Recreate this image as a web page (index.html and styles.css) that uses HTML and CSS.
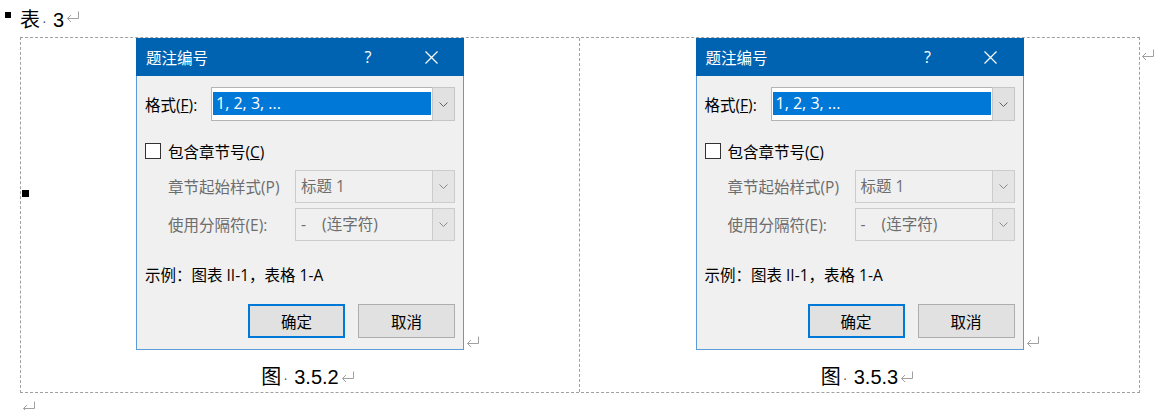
FILE: index.html
```html
<!DOCTYPE html>
<html lang="zh-CN">
<head>
<meta charset="utf-8">
<link rel="stylesheet" href="styles.css">
</head>
<body>
<div class="heading">
  <span class="bullet"></span>
  <span class="h-text">表<span class="sp">·</span>3</span>
  <svg class="ret" width="14" height="12" viewBox="0 0 14 12"><path d="M12.5 0.5 V7.5 H1.5 M5 4 L1.5 7.5 L5 11" /></svg>
</div>

<div class="tbl">
  <div class="cell cell-left">
    <div class="fig">
      <div class="dialog">
        <div class="titlebar">
          <span class="title">题注编号</span>
          <span class="help">?</span>
          <span class="close"><svg width="13" height="13" viewBox="0 0 13 13"><path d="M0.5 0.5 L12.5 12.5 M12.5 0.5 L0.5 12.5"/></svg></span>
        </div>
        <div class="dbody">
          <div class="row fmt">
            <span class="lbl">格式(<u>F</u>):</span>
            <div class="combo active">
              <span class="sel">1, 2, 3, ...</span>
              <span class="arrow"><svg width="9" height="5" viewBox="0 0 9 5"><path d="M0.5 0.5 L4.5 4.5 L8.5 0.5"/></svg></span>
            </div>
          </div>
          <div class="row chk"><span class="box"></span><span>包含章节号(<u>C</u>)</span></div>
          <div class="row sub first">
            <span class="lbl2">章节起始样式(P)</span>
            <div class="combo dis">
              <span class="val">标题 1</span>
              <span class="arrow"><svg width="9" height="5" viewBox="0 0 9 5"><path d="M0.5 0.5 L4.5 4.5 L8.5 0.5"/></svg></span>
            </div>
          </div>
          <div class="row sub second">
            <span class="lbl2">使用分隔符(E):</span>
            <div class="combo dis">
              <span class="val">-&nbsp;&nbsp;&nbsp;&nbsp;(连字符)</span>
              <span class="arrow"><svg width="9" height="5" viewBox="0 0 9 5"><path d="M0.5 0.5 L4.5 4.5 L8.5 0.5"/></svg></span>
            </div>
          </div>
          <div class="example">示例：图表 II-1，表格 1-A</div>
          <div class="btns"><span class="btn default">确定</span><span class="btn">取消</span></div>
        </div>
      </div>
      <span class="ret-after"><svg class="ret" width="14" height="12" viewBox="0 0 14 12"><path d="M12.5 0.5 V7.5 H1.5 M5 4 L1.5 7.5 L5 11" /></svg></span>
    </div>
    <div class="caption"><span class="cap-text">图<span class="sp">·</span>3.5.2</span><span class="ret-after cap"><svg class="ret" width="14" height="12" viewBox="0 0 14 12"><path d="M12.5 0.5 V7.5 H1.5 M5 4 L1.5 7.5 L5 11" /></svg></span></div>
  </div>

  <div class="cell cell-right">
    <div class="fig">
      <div class="dialog">
        <div class="titlebar">
          <span class="title">题注编号</span>
          <span class="help">?</span>
          <span class="close"><svg width="13" height="13" viewBox="0 0 13 13"><path d="M0.5 0.5 L12.5 12.5 M12.5 0.5 L0.5 12.5"/></svg></span>
        </div>
        <div class="dbody">
          <div class="row fmt">
            <span class="lbl">格式(<u>F</u>):</span>
            <div class="combo active">
              <span class="sel">1, 2, 3, ...</span>
              <span class="arrow"><svg width="9" height="5" viewBox="0 0 9 5"><path d="M0.5 0.5 L4.5 4.5 L8.5 0.5"/></svg></span>
            </div>
          </div>
          <div class="row chk"><span class="box"></span><span>包含章节号(<u>C</u>)</span></div>
          <div class="row sub first">
            <span class="lbl2">章节起始样式(P)</span>
            <div class="combo dis">
              <span class="val">标题 1</span>
              <span class="arrow"><svg width="9" height="5" viewBox="0 0 9 5"><path d="M0.5 0.5 L4.5 4.5 L8.5 0.5"/></svg></span>
            </div>
          </div>
          <div class="row sub second">
            <span class="lbl2">使用分隔符(E):</span>
            <div class="combo dis">
              <span class="val">-&nbsp;&nbsp;&nbsp;&nbsp;(连字符)</span>
              <span class="arrow"><svg width="9" height="5" viewBox="0 0 9 5"><path d="M0.5 0.5 L4.5 4.5 L8.5 0.5"/></svg></span>
            </div>
          </div>
          <div class="example">示例：图表 II-1，表格 1-A</div>
          <div class="btns"><span class="btn default">确定</span><span class="btn">取消</span></div>
        </div>
      </div>
      <span class="ret-after"><svg class="ret" width="14" height="12" viewBox="0 0 14 12"><path d="M12.5 0.5 V7.5 H1.5 M5 4 L1.5 7.5 L5 11" /></svg></span>
    </div>
    <div class="caption"><span class="cap-text">图<span class="sp">·</span>3.5.3</span><span class="ret-after cap"><svg class="ret" width="14" height="12" viewBox="0 0 14 12"><path d="M12.5 0.5 V7.5 H1.5 M5 4 L1.5 7.5 L5 11" /></svg></span></div>
  </div>

  <svg class="ret row-end" width="14" height="12" viewBox="0 0 14 12"><path d="M12.5 0.5 V7.5 H1.5 M5 4 L1.5 7.5 L5 11" /></svg>
  <span class="anchor"></span>
</div>

<div class="after"><svg class="ret" width="14" height="12" viewBox="0 0 14 12"><path d="M12.5 0.5 V7.5 H1.5 M5 4 L1.5 7.5 L5 11" /></svg></div>
</body>
</html>
```

FILE: styles.css
```css
html, body {
  margin: 0;
  padding: 0;
  background: #ffffff;
}

body {
  font-family: "Open Sans", "Noto Sans CJK SC", sans-serif;
  color: #000;
}

.ret {
  display: block;
  fill: none;
  stroke: #a0a0a0;
  stroke-width: 1;
}

.heading {
  height: 37px;
  box-sizing: border-box;
  display: flex;
  align-items: flex-start;
  padding-left: 5px;
  padding-top: 8px;
}

.bullet {
  width: 6px;
  height: 6px;
  background: #000;
  margin-top: 4px;
  margin-right: 9px;
  flex: none;
}

.h-text {
  font-family: "Liberation Sans", "Noto Sans CJK SC", sans-serif;
  font-size: 20px;
  line-height: 24px;
  display: flex;
}

.sp {
  display: inline-block;
  width: 13px;
  padding-left: 2px;
  box-sizing: border-box;
  color: #555;
  font-family: "Liberation Sans", sans-serif;
  font-size: 14px;
  line-height: 24px;
  position: relative;
  top: 1px;
}

.heading .ret {
  margin-top: 3px;
  margin-left: 2px;
}

/* table */
.tbl {
  position: relative;
  margin-left: 20px;
  width: 1120px;
  height: 356px;
  box-sizing: border-box;
  border: 1px dashed #a0a0a0;
  display: flex;
}

.cell {
  box-sizing: border-box;
  display: flex;
  flex-direction: column;
  align-items: center;
}

.cell-left {
  width: 559px;
  border-right: 1px dashed #a0a0a0;
}

.cell-right {
  flex: 1;
}

.fig {
  display: flex;
}

.ret-after {
  width: 0;
  align-self: flex-end;
  overflow: visible;
}

.fig .ret-after .ret {
  margin-left: 2px;
  margin-bottom: 2px;
}

.row-end {
  position: absolute;
  left: 1120px;
  top: 11px;
}

.anchor {
  position: absolute;
  left: 1px;
  top: 152px;
  width: 7px;
  height: 7px;
  background: #000;
}

/* dialog */
.dialog {
  width: 328px;
  font-size: 15.5px;
}

.titlebar {
  height: 38px;
  background: #0063b1;
  color: #fff;
  display: flex;
  align-items: center;
}

.title {
  padding-left: 10px;
  font-size: 15.5px;
}

.help {
  margin-left: auto;
  width: 20px;
  text-align: center;
  font-size: 16px;
}

.close {
  width: 40px;
  margin-left: 33px;
  margin-right: 13px;
  display: flex;
  justify-content: center;
}

.close svg {
  display: block;
  fill: none;
  stroke: #fff;
  stroke-width: 1.2;
}

.dbody {
  height: 274px;
  box-sizing: border-box;
  background: #f0f0f0;
  border: 1px solid #5a9bd8;
  border-top: none;
  padding: 11px 8px 0 8px;
}

.row {
  display: flex;
  align-items: center;
}

.fmt {
  height: 34px;
}

.lbl {
  width: 66px;
  flex: none;
}

.combo {
  flex: 1;
  display: flex;
  box-sizing: border-box;
}

.combo.active {
  height: 34px;
  border: 1px solid #b4b4b4;
  background: #fff;
}

.sel {
  flex: 1;
  height: 23px;
  margin: 4px 1px 0 1px;
  background: #0078d7;
  color: #fff;
  line-height: 23px;
  padding-left: 3px;
  font-size: 16px;
}

.arrow {
  width: 23px;
  flex: none;
  box-sizing: border-box;
  margin: -1px -1px -1px 0;
  border: 1px solid #c6c6c6;
  background: #e1e1e1;
  display: flex;
  align-items: center;
  justify-content: center;
}

.arrow svg {
  display: block;
  fill: none;
  stroke: #606060;
  stroke-width: 1;
}

.chk {
  margin-top: 20px;
  height: 20px;
}

.box {
  width: 16px;
  height: 16px;
  box-sizing: border-box;
  border: 1px solid #333;
  background: #fff;
  margin-right: 7px;
  flex: none;
}

.sub {
  padding-left: 23px;
  color: #6d6d6d;
}

.sub.first {
  margin-top: 9px;
}

.sub.second {
  margin-top: 5px;
}

.lbl2 {
  width: 127px;
  flex: none;
}

.combo.dis {
  height: 33px;
  border: 1px solid #cccccc;
  background: #f0f0f0;
}

.val {
  flex: 1;
  padding-left: 5px;
  line-height: 31px;
  color: #6d6d6d;
}

.combo.dis .arrow {
  border-color: #cccccc;
  background: #e5e5e5;
}

.combo.dis .arrow svg {
  stroke: #8a8a8a;
}

.example {
  margin-top: 23px;
  line-height: 22px;
}

.btns {
  margin-top: 18px;
  display: flex;
  justify-content: flex-end;
  gap: 13px;
}

.btn {
  width: 97px;
  height: 34px;
  box-sizing: border-box;
  background: #e1e1e1;
  border: 1px solid #adadad;
  display: flex;
  align-items: center;
  justify-content: center;
  font-size: 15.5px;
}

.btn.default {
  border: 2px solid #0078d7;
}

/* caption */
.caption {
  margin-top: 14px;
  display: flex;
  line-height: 26px;
}

.cap-text {
  font-family: "Liberation Sans", "Noto Sans CJK SC", sans-serif;
  font-size: 20px;
  display: flex;
}

.cap-text .sp {
  line-height: 26px;
}

.ret-after.cap .ret {
  margin-left: 2px;
  margin-bottom: 7px;
}

.after {
  padding-left: 22px;
  padding-top: 8px;
}
```
